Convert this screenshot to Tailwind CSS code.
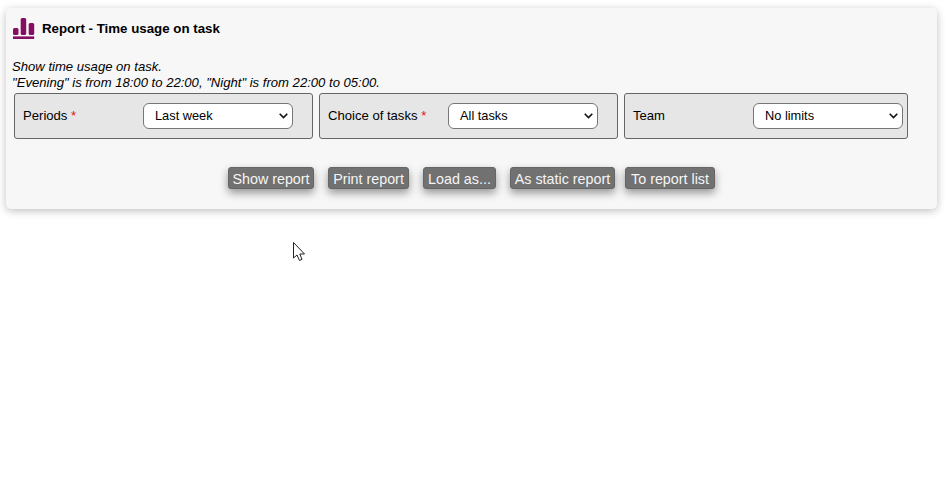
<!DOCTYPE html>
<html lang="en">
<head>
  <meta charset="UTF-8">
  <title>Report - Time usage on task</title>
  <script src="https://cdn.jsdelivr.net/npm/@tailwindcss/browser@4"></script>
</head>
<body class="bg-white font-['Liberation_Sans',Arial,sans-serif] text-[13.1px] text-black h-[492px] overflow-hidden relative">
  <!-- card -->
  <div class="ml-[6px] mt-[8px] w-[931px] h-[201px] bg-[#f7f7f7] rounded-[5px] shadow-[0_2px_8px_rgba(0,0,0,0.25)] pl-[6px] pt-[9px]">
    <div class="flex items-center h-[23px] pl-[1px] gap-[7px]">
      <svg width="22" height="22" viewBox="0 0 22 22" fill="#850d62">
        <rect x="0" y="10" width="5.5" height="7" rx="1.5"/>
        <rect x="7.7" y="0" width="5.5" height="17" rx="1.5"/>
        <rect x="15.7" y="5" width="5.5" height="12" rx="1.5"/>
        <rect x="0" y="18.4" width="21.2" height="2.6"/>
      </svg>
      <h1 class="font-bold text-[13.3px] pt-[1px]">Report - Time usage on task</h1>
    </div>
    <p class="mt-[19px] italic leading-[16px]">Show time usage on task.<br>"Evening" is from 18:00 to 22:00, "Night" is from 22:00 to 05:00.</p>
    <div class="flex gap-[6px] ml-[2px] mt-[2px]">
      <div class="w-[299px] h-[46px] flex items-center justify-between bg-[#e6e6e6] border border-[#666] rounded-[3px] pl-[8px] pr-[19px]">
        <label>Periods <span class="text-[#e01010]">*</span></label>
        <div class="relative">
          <select class="block appearance-none w-[150px] h-[26px] bg-white border border-[#767676] rounded-[6px] pl-[11px] text-[12.8px]"><option>Last week</option></select>
          <svg class="absolute right-[5px] top-[10px]" width="9" height="6" viewBox="0 0 9 6"><path d="M0.7 0.8 L4.5 4.6 L8.3 0.8" fill="none" stroke="#111" stroke-width="1.6"/></svg>
        </div>
      </div>
      <div class="w-[299px] h-[46px] flex items-center justify-between bg-[#e6e6e6] border border-[#666] rounded-[3px] pl-[8px] pr-[19px]">
        <label>Choice of tasks <span class="text-[#e01010]">*</span></label>
        <div class="relative">
          <select class="block appearance-none w-[150px] h-[26px] bg-white border border-[#767676] rounded-[6px] pl-[11px] text-[12.8px]"><option>All tasks</option></select>
          <svg class="absolute right-[5px] top-[10px]" width="9" height="6" viewBox="0 0 9 6"><path d="M0.7 0.8 L4.5 4.6 L8.3 0.8" fill="none" stroke="#111" stroke-width="1.6"/></svg>
        </div>
      </div>
      <div class="w-[284px] h-[46px] flex items-center justify-between bg-[#e6e6e6] border border-[#666] rounded-[3px] pl-[8px] pr-[4px]">
        <label>Team</label>
        <div class="relative">
          <select class="block appearance-none w-[150px] h-[26px] bg-white border border-[#767676] rounded-[6px] pl-[11px] text-[12.8px]"><option>No limits</option></select>
          <svg class="absolute right-[5px] top-[10px]" width="9" height="6" viewBox="0 0 9 6"><path d="M0.7 0.8 L4.5 4.6 L8.3 0.8" fill="none" stroke="#111" stroke-width="1.6"/></svg>
        </div>
      </div>
    </div>
    <div class="flex ml-[216px] mt-[28px] text-[14.3px] text-[#f5f5f5]">
      <button class="h-[22px] w-[86px] pt-[1px] bg-[#717171] border border-[#666] rounded-[3px] shadow-[0_4px_8px_rgba(0,0,0,0.4)]">Show report</button>
      <button class="h-[22px] w-[81px] ml-[14px] pt-[1px] bg-[#717171] border border-[#666] rounded-[3px] shadow-[0_4px_8px_rgba(0,0,0,0.4)]">Print report</button>
      <button class="h-[22px] w-[73px] ml-[14px] pt-[1px] bg-[#717171] border border-[#666] rounded-[3px] shadow-[0_4px_8px_rgba(0,0,0,0.4)]">Load as...</button>
      <button class="h-[22px] w-[105px] ml-[14px] pt-[1px] bg-[#717171] border border-[#666] rounded-[3px] shadow-[0_4px_8px_rgba(0,0,0,0.4)]">As static report</button>
      <button class="h-[22px] w-[90px] ml-[10px] pt-[1px] bg-[#717171] border border-[#666] rounded-[3px] shadow-[0_4px_8px_rgba(0,0,0,0.4)]">To report list</button>
    </div>
  </div>
  <!-- mouse pointer from the capture -->
  <svg class="absolute left-[293px] top-[242px]" width="13" height="20" viewBox="0 0 13 20">
    <path d="M0.5 0.5 V16 L4 13 L6.5 18.5 L9 17.3 L6.8 12 H11.5 Z" fill="#fff" stroke="#222" stroke-width="1"/>
  </svg>
</body>
</html>
